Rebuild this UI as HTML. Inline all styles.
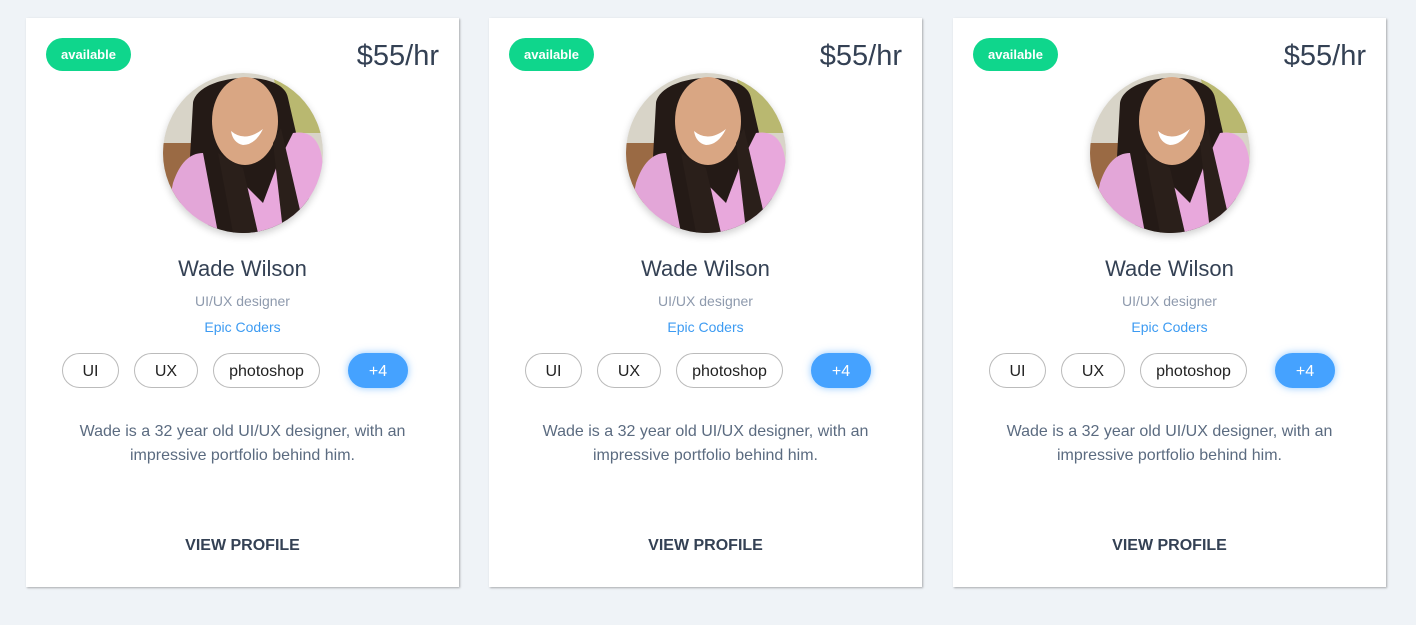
<!DOCTYPE html>
<html><head><meta charset="utf-8"><style>
body{margin:0;width:1416px;height:625px;background:#eff3f7;font-family:"Liberation Sans",sans-serif;position:relative;overflow:hidden}
.card{position:absolute;top:18px;width:433px;height:569px;background:#fff;box-shadow:1px 1px 2px rgba(0,0,0,.3)}
.badge{position:absolute;left:20px;top:20px;width:85px;height:33px;border-radius:17px;background:#0fd68c;color:#fff;font-weight:bold;font-size:13px;line-height:33px;text-align:center}
.price{position:absolute;right:20px;top:20px;font-size:29px;color:#344154;line-height:36px}
.av{position:absolute;left:137px;top:55px;width:160px;height:160px;border-radius:50%;overflow:hidden;box-shadow:0 3px 8px rgba(0,0,0,.2)}
.name{position:absolute;left:0;right:0;top:238px;text-align:center;font-size:22px;color:#344154}
.role{position:absolute;left:0;right:0;top:275px;text-align:center;font-size:14px;color:#8e9aad}
.co{position:absolute;left:0;right:0;top:301px;text-align:center;font-size:14px;color:#3d9bf2}
.tag{position:absolute;top:335px;height:33px;border:1px solid #bbb;border-radius:18px;font-size:16px;line-height:35px;text-align:center;color:#222;box-sizing:content-box}
.plus{background:#45a2ff;border-color:#45a2ff;color:#fff;box-shadow:0 0 8px rgba(69,162,255,.6)}
.desc{position:absolute;left:40px;right:40px;top:402px;text-align:center;font-size:16px;line-height:24px;color:#5b6b80}
.vp{position:absolute;left:0;right:0;top:519px;text-align:center;font-size:16px;font-weight:bold;color:#344154}
</style></head><body>
<div class="card" style="left:26px">
<div class="badge">available</div><div class="price">$55/hr</div>
<div class="av"><svg width="160" height="160" viewBox="0 0 160 160"><rect width="160" height="160" fill="#d8d4c8"/><path d="M110 0H160V60H120Z" fill="#b9b870"/><rect x="0" y="70" width="30" height="60" fill="#9a6a44"/><path d="M30 30C35 0 120 -5 125 25L140 90 150 150 120 160 50 160 25 120Z" fill="#241a16"/><ellipse cx="82" cy="48" rx="33" ry="44" fill="#d9a683"/><path d="M68 58Q82 70 100 56Q92 72 80 72Q70 70 68 58Z" fill="#fff"/><path d="M10 110Q20 80 40 80L55 160H0Z" fill="#e3a6d8"/><path d="M70 100L100 130 115 90 130 60Q160 55 160 100V140L130 160 90 160 70 120Z" fill="#e8a8dc"/><path d="M55 80L70 160H95L80 95Z" fill="#2a1f1a"/><path d="M118 55L140 150 120 158 110 70Z" fill="#2a1f1a"/></svg></div>
<div class="name">Wade Wilson</div><div class="role">UI/UX designer</div><div class="co">Epic Coders</div>
<div class="tag" style="left:36px;width:55px">UI</div><div class="tag" style="left:108px;width:62px">UX</div><div class="tag" style="left:187px;width:105px">photoshop</div><div class="tag plus" style="left:322px;width:58px">+4</div>
<div class="desc">Wade is a 32 year old UI/UX designer, with an impressive portfolio behind him.</div>
<div class="vp">VIEW PROFILE</div>
</div>
<div class="card" style="left:489px">
<div class="badge">available</div><div class="price">$55/hr</div>
<div class="av"><svg width="160" height="160" viewBox="0 0 160 160"><rect width="160" height="160" fill="#d8d4c8"/><path d="M110 0H160V60H120Z" fill="#b9b870"/><rect x="0" y="70" width="30" height="60" fill="#9a6a44"/><path d="M30 30C35 0 120 -5 125 25L140 90 150 150 120 160 50 160 25 120Z" fill="#241a16"/><ellipse cx="82" cy="48" rx="33" ry="44" fill="#d9a683"/><path d="M68 58Q82 70 100 56Q92 72 80 72Q70 70 68 58Z" fill="#fff"/><path d="M10 110Q20 80 40 80L55 160H0Z" fill="#e3a6d8"/><path d="M70 100L100 130 115 90 130 60Q160 55 160 100V140L130 160 90 160 70 120Z" fill="#e8a8dc"/><path d="M55 80L70 160H95L80 95Z" fill="#2a1f1a"/><path d="M118 55L140 150 120 158 110 70Z" fill="#2a1f1a"/></svg></div>
<div class="name">Wade Wilson</div><div class="role">UI/UX designer</div><div class="co">Epic Coders</div>
<div class="tag" style="left:36px;width:55px">UI</div><div class="tag" style="left:108px;width:62px">UX</div><div class="tag" style="left:187px;width:105px">photoshop</div><div class="tag plus" style="left:322px;width:58px">+4</div>
<div class="desc">Wade is a 32 year old UI/UX designer, with an impressive portfolio behind him.</div>
<div class="vp">VIEW PROFILE</div>
</div>
<div class="card" style="left:953px">
<div class="badge">available</div><div class="price">$55/hr</div>
<div class="av"><svg width="160" height="160" viewBox="0 0 160 160"><rect width="160" height="160" fill="#d8d4c8"/><path d="M110 0H160V60H120Z" fill="#b9b870"/><rect x="0" y="70" width="30" height="60" fill="#9a6a44"/><path d="M30 30C35 0 120 -5 125 25L140 90 150 150 120 160 50 160 25 120Z" fill="#241a16"/><ellipse cx="82" cy="48" rx="33" ry="44" fill="#d9a683"/><path d="M68 58Q82 70 100 56Q92 72 80 72Q70 70 68 58Z" fill="#fff"/><path d="M10 110Q20 80 40 80L55 160H0Z" fill="#e3a6d8"/><path d="M70 100L100 130 115 90 130 60Q160 55 160 100V140L130 160 90 160 70 120Z" fill="#e8a8dc"/><path d="M55 80L70 160H95L80 95Z" fill="#2a1f1a"/><path d="M118 55L140 150 120 158 110 70Z" fill="#2a1f1a"/></svg></div>
<div class="name">Wade Wilson</div><div class="role">UI/UX designer</div><div class="co">Epic Coders</div>
<div class="tag" style="left:36px;width:55px">UI</div><div class="tag" style="left:108px;width:62px">UX</div><div class="tag" style="left:187px;width:105px">photoshop</div><div class="tag plus" style="left:322px;width:58px">+4</div>
<div class="desc">Wade is a 32 year old UI/UX designer, with an impressive portfolio behind him.</div>
<div class="vp">VIEW PROFILE</div>
</div>
</body></html>
